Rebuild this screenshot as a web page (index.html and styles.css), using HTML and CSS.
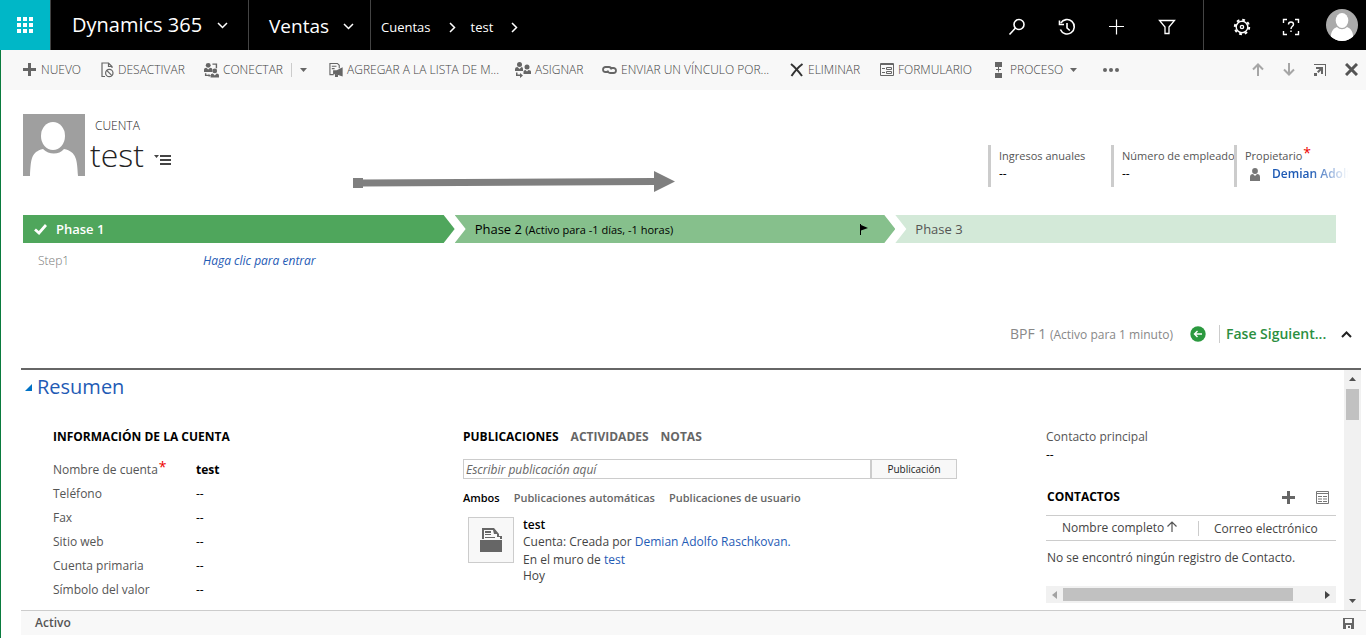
FILE: index.html
```html
<!DOCTYPE html>
<html lang="es">
<head>
<meta charset="utf-8">
<meta name="viewport" content="width=device-width, initial-scale=1">
<title>Cuenta: test - Dynamics 365</title>
<link rel="stylesheet" href="styles.css">
</head>
<body>
<header class="topbar">
  <button class="launcher" aria-label="Aplicaciones">
    <svg width="16" height="16" viewBox="0 0 16 16" fill="#fff"><path d="M0 0h4v4H0zM6 0h4v4H6zM12 0h4v4h-4zM0 6h4v4H0zM6 6h4v4H6zM12 6h4v4h-4zM0 12h4v4H0zM6 12h4v4H6zM12 12h4v4h-4z"/></svg>
  </button>
  <button class="brand">Dynamics 365
    <svg width="11" height="7" viewBox="0 0 11 7" fill="none" stroke="#fff" stroke-width="1.5"><path d="M1 1l4.500 4.500L10 1"/></svg>
  </button>
  <button class="brand area">Ventas
    <svg width="11" height="7" viewBox="0 0 11 7" fill="none" stroke="#fff" stroke-width="1.5"><path d="M1 1l4.500 4.500L10 1"/></svg>
  </button>
  <nav class="crumbs" aria-label="Ruta">
    <a href="#">Cuentas</a>
    <svg width="7" height="11" viewBox="0 0 7 11" fill="none" stroke="#fff" stroke-width="1.5"><path d="M1 1l4.500 4.500L1 10"/></svg>
    <a href="#">test</a>
    <svg width="7" height="11" viewBox="0 0 7 11" fill="none" stroke="#fff" stroke-width="1.5"><path d="M1 1l4.500 4.500L1 10"/></svg>
  </nav>
  <div class="tools">
    <button aria-label="Buscar"><svg width="18" height="18" viewBox="0 0 18 18" fill="none" stroke="#fff" stroke-width="1.6"><circle cx="11" cy="6.500" r="5"/><path d="M7.500 10L1.500 16.500"/></svg></button>
    <button aria-label="Recientes"><svg width="18" height="18" viewBox="0 0 18 18" fill="none" stroke="#fff" stroke-width="1.6"><path d="M2.800 5.200A7.200 7.200 0 1 1 2.400 11.500"/><path d="M1.500 2.500v4h4.500M9 5v5l2.800 2.500"/></svg></button>
    <button aria-label="Crear"><svg width="18" height="18" viewBox="0 0 18 18" stroke="#fff" stroke-width="1.200"><path d="M8.500 1.500v15M1 8.500h15"/></svg></button>
    <button aria-label="Búsqueda avanzada"><svg width="18" height="18" viewBox="0 0 18 18" fill="none" stroke="#fff" stroke-width="1.300"><path d="M1.500 2.500h15L11 9v6.500H7V9z"/></svg></button>
  </div>
  <div class="tools settings">
    <button aria-label="Configuración"><svg width="18" height="18" viewBox="0 0 18 18" fill="none" stroke="#fff"><circle cx="9" cy="9" r="5.800" stroke-width="1.400"/><circle cx="9" cy="9" r="7.200" stroke-width="2" stroke-dasharray="2.800 2.855"/><circle cx="9" cy="9" r="1.600" stroke-width="1.400"/></svg></button>
    <button aria-label="Ayuda"><svg width="18" height="18" viewBox="0 0 18 18" fill="none" stroke="#fff" stroke-width="1.400"><path d="M1.500 5V1.500H5M13 1.500h3.500V5M16.500 13v3.500H13M5 16.500H1.500V13M6.500 6.500c0-3.300 5-3.300 5 0C11.500 8.300 9 8.500 9 11M9 12.500V14"/></svg></button>
    <button aria-label="Usuario"><svg width="32" height="32" viewBox="0 0 32 32"><clipPath id="round"><circle cx="16" cy="16" r="16"/></clipPath><g clip-path="url(#round)"><path fill="#aaa" d="M0 0h32v32H0z"/><path fill="#fff" d="M5 32c-1-9 2-12.500 6-14 3 3 7 3 10 0 4 1.500 7 5 6 14z"/><ellipse cx="16" cy="11.500" rx="6.300" ry="7.500" fill="#fff"/></g></svg></button>
  </div>
</header>

<main class="page">
  <div class="commands" role="toolbar" aria-label="Comandos">
    <button><svg width="14" height="13" viewBox="0 0 14 13" fill="#666"><path d="M5 0h3v5h5v3H8v5H5V8H0V5h5z"/></svg>NUEVO</button>
    <button><svg width="13" height="16" viewBox="0 0 13 16" fill="none" stroke="#666" stroke-width="1.200"><path d="M4 14.500H1V1h6.500L11 4.500V6M7.500 1v3.500H11"/><circle cx="8.300" cy="11" r="3.700"/><path d="M5.700 8.400l5.200 5.200"/></svg>DESACTIVAR</button>
    <button><svg width="15" height="16" viewBox="0 0 16 16" fill="#666"><circle cx="4.500" cy="3" r="2.600"/><path d="M0 10V7.500Q0 5.500 2.500 5.500L4.500 7.500 6.500 5.500Q9 5.500 9 7.500V10z"/><circle cx="11.500" cy="9" r="2.500"/><path d="M7 16v-2.200q0-2 2.500-2l2 2 2-2q2.500 0 2.500 2V16zM9 1h5v5h-1.500V2.500H9zM1 11.500h1.500V13H5V12l2 2-2 1.500v-1H1z"/></svg>CONECTAR<span class="split"></span><svg width="7" height="4" viewBox="0 0 7 4" fill="#666"><path d="M0 0h7L3.500 4z"/></svg></button>
    <button><svg width="14" height="16" viewBox="0 0 15 16" fill="none" stroke="#666" stroke-width="1.200"><path d="M5 13H1V1h8l2 2v3M3 4h5M3 6.500h3"/><path fill="#666" d="M5 9h3v3H5zM8 9l6-3v8L8 12zM7 12v3h2v-2"/></svg>AGREGAR A LA LISTA DE M...</button>
    <button><svg width="16" height="16" viewBox="0 0 16 16" fill="#666"><circle cx="4.500" cy="2.600" r="2.500"/><path d="M0 9V7q0-2 2.500-2l2 2 2-2Q8 5 8 7v2z"/><circle cx="12" cy="5" r="2.500"/><path d="M8.500 12V9.500Q8.500 8 10.500 8L12 9.500 13.500 8Q16 8 16 9.500V12zM1 10.500h1.500v2H5V11l3 2.500L5 16v-2H1z"/></svg>ASIGNAR</button>
    <button><svg width="15" height="8" viewBox="0 0 15 8" fill="none" stroke="#666" stroke-width="1.800"><path d="M6.500 6H3.500a2.500 2.500 0 0 1 0-5H7q2 0 2.300 2.500M8.500 2h3a2.500 2.500 0 0 1 0 5H8Q6 7 5.700 4.500"/></svg>ENVIAR UN VÍNCULO POR...</button>
    <button><svg width="14" height="14" viewBox="0 0 14 14" fill="none" stroke="#333" stroke-width="2"><path d="M1 1q5 4 11 12M12.500 1Q7 5 1.500 13"/></svg>ELIMINAR</button>
    <button><svg width="14" height="13" viewBox="0 0 14 13" fill="none" stroke="#666"><path d="M.5.500h13v12H.5zM.5 1.500h13M2 5.500h3M2 9.500h3M6.500 4.500h5v2h-5zM6.500 8.500h5v2h-5z"/></svg>FORMULARIO</button>
    <button><svg width="12" height="16" viewBox="0 0 12 16" fill="#666"><path d="M1 0h7v5H1zM1 11h7v5H1zM4 5h1v2h2v1H5v1l-.5 2L4 9V8H2V7h2z"/></svg>PROCESO<svg class="caret" width="7" height="4" viewBox="0 0 7 4" fill="#666"><path d="M0 0h7L3.500 4z"/></svg></button>
    <button aria-label="Más comandos"><svg width="16" height="4" viewBox="0 0 16 4" fill="#666"><circle cx="2" cy="2" r="2"/><circle cx="8" cy="2" r="2"/><circle cx="14" cy="2" r="2"/></svg></button>
    <div class="pager">
      <button aria-label="Anterior"><svg width="12" height="13" viewBox="0 0 12 13" fill="none" stroke="#a6a6a6" stroke-width="2"><path d="M6 13V2M1 6.500l5-5 5 5"/></svg></button>
      <button aria-label="Siguiente"><svg width="12" height="13" viewBox="0 0 12 13" fill="none" stroke="#a6a6a6" stroke-width="2"><path d="M6 0v11M1 6.500l5 5 5-5"/></svg></button>
      <button aria-label="Abrir en ventana"><svg width="12" height="12" viewBox="0 0 12 12" fill="#666"><path d="M0 0h12v12h-1V1H0zM2 3h7v7H7V6.500L4.500 9 3 7.500 5.500 5H2zM0 9h3v3H0z"/></svg></button>
      <button aria-label="Cerrar"><svg width="13" height="13" viewBox="0 0 13 13" stroke="#555" stroke-width="3"><path d="M1 1l11 11M12 1L1 12"/></svg></button>
    </div>
  </div>

  <section class="record">
    <svg class="photo" width="62" height="62" viewBox="0 0 62 62"><path fill="#9f9f9f" d="M0 0h62v62H0z"/><path fill="#fff" d="M7 62c1-17 1-24 13-27 6 6 16 6 21 0 13 3 13 11 14 27z"/><ellipse cx="30" cy="22" rx="13" ry="15" fill="#9f9f9f"/><ellipse cx="30" cy="22" rx="12" ry="14" fill="#fff"/></svg>
    <div class="title">
      <p class="kind">CUENTA</p>
      <div class="name-row"><h1>test</h1>
        <button aria-label="Cambiar registro"><svg width="17" height="11" viewBox="0 0 17 11" fill="#444"><path d="M0 0h5L2.500 3zM6 0h11v2H6zM6 4h11v2H6zM6 8h11v2H6z"/></svg></button></div>
    </div>
    <dl class="facts">
      <div><dt>Ingresos anuales</dt><dd>--</dd></div>
      <div><dt>Número de empleados</dt><dd>--</dd></div>
      <div><dt>Propietario<sup class="req">*</sup></dt><dd class="owner"><svg width="10" height="13" viewBox="0 0 10 13" fill="#777"><circle cx="5" cy="3" r="2.900"/><path d="M0 13V9q0-3 3-3l2 2 2-2q3 0 3 3v4z"/></svg><a href="#">Demian Adolfo</a></dd></div>
    </dl>
  </section>
  <svg class="pointer" width="322" height="22" viewBox="0 0 322 22" fill="#7f7f7f"><path d="M0 7h10v1.500L301 7V0l21 10.500L301 21v-7L10 15.500V17H0z"/></svg>

  <section class="process">
    <ol class="stages">
      <li class="done"><svg width="13" height="11" viewBox="0 0 13 11" fill="none" stroke="#fff" stroke-width="2.800"><path d="M1 5.500l4 3.500L12 1"/></svg>Phase 1</li>
      <li class="active"><span>Phase 2 <small>(Activo para -1 días, -1 horas)</small></span><svg width="8" height="11" viewBox="0 0 8 11"><path d="M0 0h1v11H0zM1 1l7 3-7 2.500z"/></svg></li>
      <li class="next">Phase 3</li>
    </ol>
    <div class="step"><span>Step1</span><a href="#">Haga clic para entrar</a></div>
    <div class="process-bar">
      <p>BPF 1 <small>(Activo para 1 minuto)</small></p>
      <button aria-label="Fase anterior"><svg width="16" height="16" viewBox="0 0 16 16"><circle cx="8" cy="8" r="7.700" fill="#2b993f"/><path d="M12 8H4.500M7.500 5l-3 3 3 3" fill="none" stroke="#fff" stroke-width="1.400"/></svg></button>
      <button class="advance">Fase Siguient...</button>
      <button class="collapse" aria-label="Contraer"><svg width="11" height="7" viewBox="0 0 11 7" fill="none" stroke="#222" stroke-width="2"><path d="M1 6l4.500-4.500L10 6"/></svg></button>
    </div>
  </section>

  <div class="body">
    <div class="form">
      <h2><svg width="7" height="7" viewBox="0 0 7 7" fill="#0072c6"><path d="M7 0v7H0z"/></svg>Resumen</h2>
      <div class="columns">
        <section>
          <h3>INFORMACIÓN DE LA CUENTA</h3>
          <dl class="fields">
            <dt>Nombre de cuenta<sup class="req">*</sup></dt><dd><b>test</b></dd>
            <dt>Teléfono</dt><dd>--</dd>
            <dt>Fax</dt><dd>--</dd>
            <dt>Sitio web</dt><dd>--</dd>
            <dt>Cuenta primaria</dt><dd>--</dd>
            <dt>Símbolo del valor</dt><dd>--</dd>
          </dl>
        </section>
        <section class="wall">
          <div class="tabs"><button class="on">PUBLICACIONES</button><button>ACTIVIDADES</button><button>NOTAS</button></div>
          <form class="post"><input type="text" aria-label="Escribir publicación" placeholder="Escribir publicación aquí"><button type="button">Publicación</button></form>
          <div class="filters"><button class="on">Ambos</button><button>Publicaciones automáticas</button><button>Publicaciones de usuario</button></div>
          <article class="entry">
            <div class="thumb"><svg width="22" height="24" viewBox="0 0 22 24" fill="#666"><path d="M0 12h22v12H0zM2 0h12l5 6v2h3v3H20V9h-3V6h-3L13 2H4v9H2zM5 3h6v2H5zM5 6h6v1H5zM5 9h10v1H5z"/></svg></div>
            <div><p class="who">test</p><p>Cuenta: Creada por <a href="#">Demian Adolfo Raschkovan.</a></p><p>En el muro de <a href="#">test</a></p><p>Hoy</p></div>
          </article>
        </section>
        <section class="related">
          <dl class="primary"><dt>Contacto principal</dt><dd>--</dd></dl>
          <div class="grid-head"><h3>CONTACTOS</h3>
            <button aria-label="Agregar contacto"><svg width="13" height="13" viewBox="0 0 13 13" fill="#666"><path d="M5 0h3v5h5v3H8v5H5V8H0V5h5z"/></svg></button>
            <button aria-label="Ver lista"><svg width="13" height="13" viewBox="0 0 13 13" fill="none" stroke="#777"><path d="M.5.500h12v12H.5zM.5 2.500h12M2 5.500h4M7 5.500h4M2 8h4M7 8h4M2 10.500h4M7 10.500h4"/></svg></button></div>
          <table>
            <thead><tr><th scope="col">Nombre completo <svg width="10" height="11" viewBox="0 0 10 11" fill="none" stroke="#555" stroke-width="1.200"><path d="M5 11V1M.5 5.500L5 1l4.500 4.500"/></svg></th><th scope="col"><span>Correo electrónico</span></th></tr></thead>
            <tbody><tr><td colspan="2">No se encontró ningún registro de Contacto.</td></tr></tbody>
          </table>
          <div class="hscroll"><svg width="5" height="8" viewBox="0 0 5 8" fill="#a3a3a3"><path d="M5 0v8L0 4z"/></svg><div class="track"><div class="thumb-bar"></div></div><svg width="5" height="8" viewBox="0 0 5 8" fill="#444"><path d="M0 0v8l5-4z"/></svg></div>
        </section>
      </div>
    </div>
    <div class="vscroll"><svg width="7" height="4" viewBox="0 0 7 4" fill="#505050"><path d="M0 4h7L3.500 0z"/></svg><div class="track"><div class="thumb-bar"></div></div><svg width="7" height="4" viewBox="0 0 7 4" fill="#505050"><path d="M0 0h7L3.500 4z"/></svg></div>
  </div>
  <footer class="status"><span>Activo</span><button aria-label="Guardar"><svg width="11" height="11" viewBox="0 0 11 11" fill="#666" fill-rule="evenodd"><path d="M0 0h11v11H0zM2 1v4h7V1zM3 7v4h5V7zM5 8h2v2H5z"/></svg></button></footer>
</main>
</body>
</html>
```
FILE: styles.css
```css
* { box-sizing: border-box; }
body { margin: 0; min-height: 100vh; display: flex; flex-direction: column; background: #fff; color: #444; font: 12px/18px "Open Sans", "Noto Sans", sans-serif; }
button { margin: 0; padding: 0; border: 0; background: none; color: inherit; font: inherit; cursor: pointer; }
h1, h2, h3, p, dl, dd, ol { margin: 0; padding: 0; font-weight: 400; }
a { color: #1f5bb5; text-decoration: none; }
svg { display: block; flex: none; }
small { font-size: 11px; }

.topbar { display: flex; height: 50px; background: #000; color: #fff; }
.launcher { width: 50px; background: #00b7c7; display: grid; place-items: center; }
.brand { display: flex; align-items: center; justify-content: space-between; width: 198px; padding: 0 20px 0 21px; border-left: 1px solid #444; font-size: 20px; }
.area { width: 122px; padding: 2px 16px 0 20px; font-size: 19px; }
.crumbs { display: flex; align-items: center; gap: 18px; padding: 4px 0 0 10px; border-left: 1px solid #444; font-size: 13px; }
.crumbs a { color: #fff; }
.crumbs a + svg + a { margin-left: -3px; }
.tools { display: flex; align-items: center; gap: 32px; margin-left: auto; padding: 4px 27px 0 0; }
.settings { margin-left: 0; padding: 0 8px 0 29px; border-left: 1px solid #444; gap: 31px; }
.settings button:last-child { margin: 0 0 0 -5px; }
.settings button:not(:last-child) { padding-top: 4px; }

.page { flex: 1; display: flex; flex-direction: column; position: relative; border-left: 1px solid #0a7b3e; }
.commands { display: grid; grid-template-columns: 78px 103px 125px 186px 87px 188px 90px 114px 109px 16px 1fr; height: 40px; padding: 0 8px 1px 22px; background: #f8f8f8; align-items: center; }
.commands button { display: flex; align-items: center; gap: 4px; white-space: nowrap; font-weight: 300; }
.split { width: 1px; height: 14px; margin: 0 4px; background: #ccc; }
.caret { margin-left: 3px; }
.pager { display: flex; justify-content: flex-end; align-items: center; gap: 19px; }

.record { display: flex; gap: 5px; padding: 24px 9px 0 22px; }
.title { min-width: 180px; }
.kind { padding: 3px 0 0 5px; color: #222; font-weight: 300; }
.name-row { display: flex; align-items: center; gap: 10px; }
.name-row button { padding-top: 10px; }
h1 { font-size: 32px; line-height: 40px; font-weight: 300; color: #222; }
.facts { display: flex; margin: 31px 0 0 auto; }
.facts div { width: 123px; height: 42px; padding: 2px 0 0 8px; border-left: 3px solid #ccc; overflow: hidden; white-space: nowrap; }
.facts dt { color: #555; font-size: 11px; }
.facts dd { color: #000; }
.facts .owner { display: flex; align-items: center; gap: 12px; padding-left: 5px; }
.owner a { overflow: hidden; font-weight: 600; mask-image: linear-gradient(90deg, #000 45%, transparent 90%); }
.req { margin-left: 1px; color: #e00; font-size: 14px; line-height: 0; vertical-align: 2px; }
.pointer { position: absolute; left: 352px; top: 121px; }

.process { padding: 28px 30px 0 22px; }
.stages { display: grid; grid-template-columns: 432fr 441fr 441fr; list-style: none; height: 28px; }
.stages li { display: flex; align-items: center; padding-left: 20px; font-size: 13px; clip-path: polygon(0 0, calc(100% - 11px) 0, 100% 50%, calc(100% - 11px) 100%, 0 100%, 11px 50%); }
.stages .done { gap: 9px; padding-left: 11px; background: #4fa65c; color: #fff; font-weight: 600; clip-path: polygon(0 0, calc(100% - 11px) 0, 100% 50%, calc(100% - 11px) 100%, 0 100%); }
.stages .active { justify-content: space-between; padding-right: 27px; background: #86c08c; color: #000; }
.stages .next { background: #d3e9d8; color: #555; clip-path: polygon(0 0, 100% 0, 100% 100%, 0 100%, 11px 50%); }
.step { display: grid; grid-template-columns: 165px 1fr; padding: 9px 0 0 15px; color: #777; font-weight: 300; }
.step a { font-style: italic; font-weight: 400; }
.process-bar { display: flex; justify-content: flex-end; align-items: center; height: 28px; margin: 50px -16px 20px 0; color: #888; }
.process-bar p { margin-right: 17px; font-size: 14px; }
.process-bar small { font-size: 12px; }
.advance { width: 114px; margin-left: 13px; padding-left: 6px; border-left: 1px solid #ccc; color: #2b8f3f; font-size: 14px; font-weight: 600; text-align: left; white-space: nowrap; }
.collapse { margin: 0 0 0 8px; }

.body { flex: 1; display: flex; margin: 0 5px 0 20px; border-top: 2px solid #666; }
.form { flex: 1; min-width: 0; padding: 4px 8px 0 0; }
h2 { display: flex; align-items: center; gap: 5px; padding-left: 4px; color: #1f5bb5; font-size: 20px; line-height: 26px; }
.columns { display: grid; grid-template-columns: 410fr 583fr 290fr; padding: 28px 0 0 32px; }
h3, .tabs button { color: #000; font-size: 12px; line-height: 18px; font-weight: 700; }
.fields { display: grid; grid-template-columns: 143px 1fr; grid-auto-rows: 24px; margin-top: 12px; line-height: 24px; }
.fields dt, .primary dt { color: #555; }
dd { color: #000; }
.wall { padding-right: 89px; }
.tabs, .filters { display: flex; gap: 12px; }
.tabs button { color: #666; }
.tabs .on, .filters .on { color: #000; }
.filters { gap: 14px; }
.filters button { color: #666; font-weight: 600; font-size: 11px; }
.post { display: flex; height: 20px; margin: 13px 0 10px; }
.post input { flex: 1; min-width: 0; padding: 0 2px; border: 1px solid #ccc; font: italic 12px "Open Sans", sans-serif; }
.post input::placeholder { color: #666; opacity: 1; }
.post button { width: 86px; border: 1px solid #ccc; background: #f8f8f8; color: #222; font-size: 10px; }
.entry { display: flex; gap: 9px; padding: 10px 0 0 5px; }
.thumb { display: grid; place-items: center; width: 46px; height: 46px; border: 1px solid #ccc; background: #f8f8f8; }
.entry p { line-height: 18px; }
.entry .who { line-height: 16px; color: #000; font-weight: 600; }
.entry p:last-child { line-height: 14px; }
.grid-head { display: flex; align-items: center; gap: 21px; margin: 24px 0 9px; padding: 0 7px 0 1px; }
.grid-head h3 { flex: 1; }
table { width: 100%; border-collapse: collapse; text-align: left; }
thead { border: solid #ccc; border-width: 1px 0; }
th { height: 25px; padding: 0; font-weight: 400; white-space: nowrap; }
th:first-child { width: 152px; padding-left: 16px; }
th svg { display: inline; }
th span { display: block; padding-left: 15px; border-left: 1px solid #ccc; line-height: 15px; }
td { padding: 8px 0 0 1px; white-space: nowrap; }
.hscroll, .vscroll { display: flex; align-items: center; background: #f1f1f1; }
.hscroll { height: 17px; margin: 19px 0 7px; padding: 0 6px; gap: 6px; }
.hscroll .track { flex: 1; }
.hscroll .thumb-bar { width: 90%; height: 13px; background: #c1c1c1; }
.vscroll { flex-direction: column; width: 17px; padding: 7px 0; }
.vscroll .track { flex: 1; padding-top: 8px; }
.vscroll .thumb-bar { width: 13px; height: 31px; background: #c1c1c1; }
.status { display: flex; justify-content: space-between; align-items: center; height: 25px; margin: 0 0 3px 20px; padding: 0 12px 0 14px; border-top: 1px solid #ccc; background: #f8f8f8; color: #555; font-weight: 600; }
```
